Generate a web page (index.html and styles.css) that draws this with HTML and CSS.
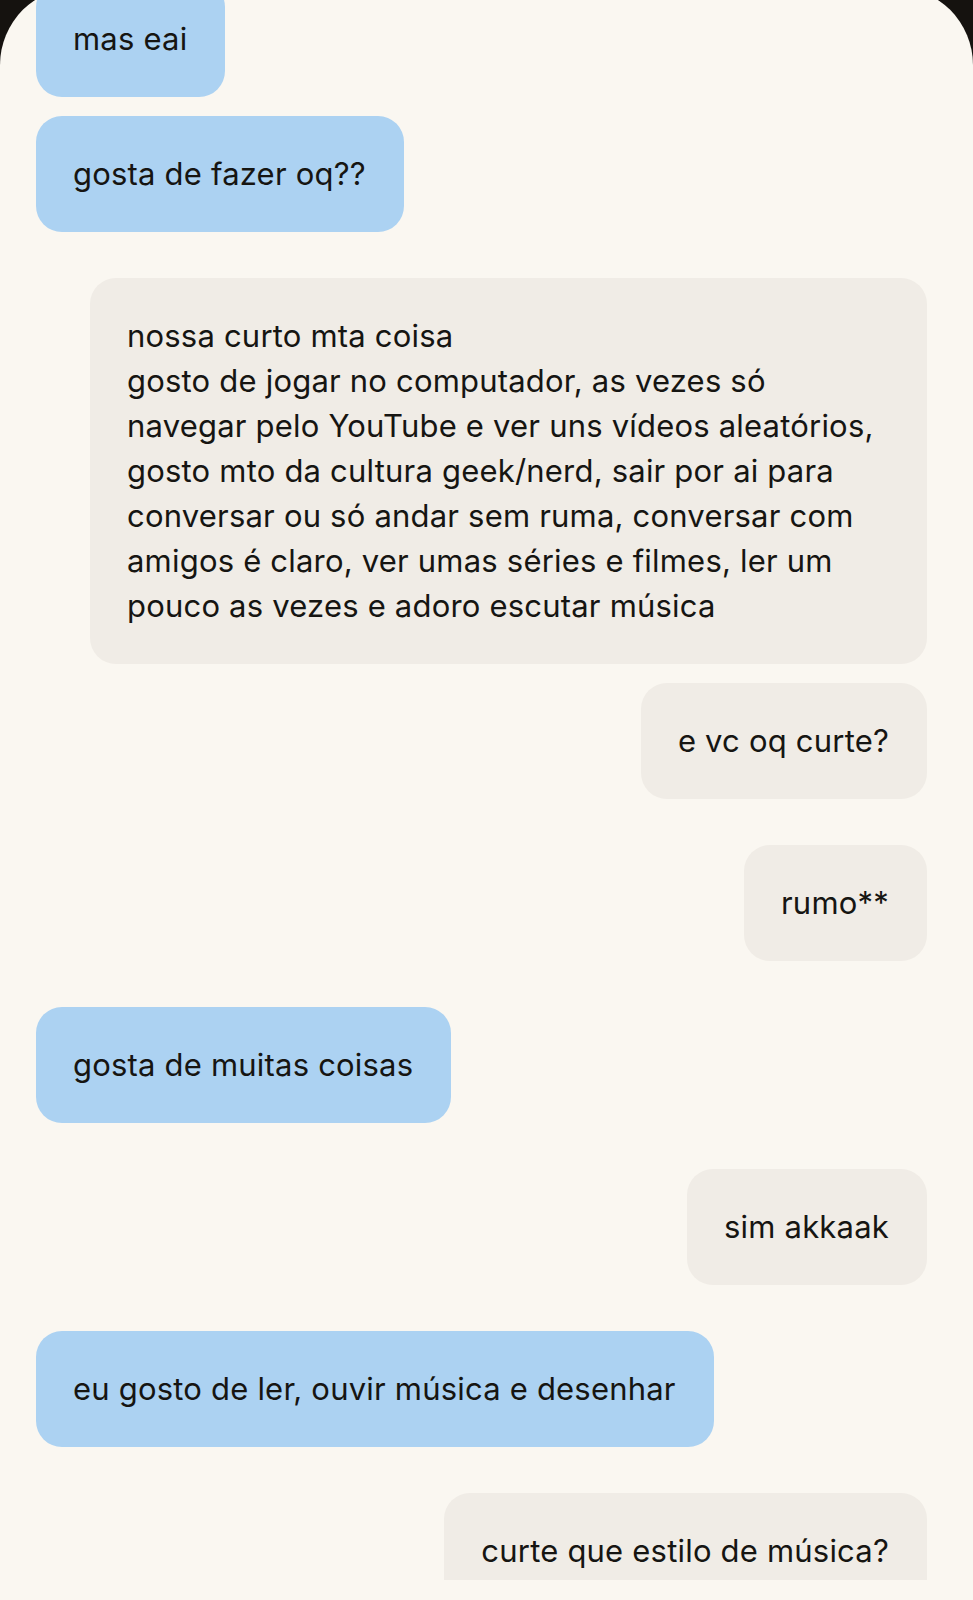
FILE: index.html
```html
<!DOCTYPE html>
<html lang="pt">
<head>
<meta charset="utf-8">
<title>Chat</title>
<link rel="stylesheet" href="styles.css">
</head>
<body>
<div class="panel">
  <div class="messages">
    <div class="msg them first"><div class="bubble">mas eai</div></div>
    <div class="msg them tight"><div class="bubble">gosta de fazer oq??</div></div>
    <div class="msg me"><div class="bubble long">nossa curto mta coisa<br>gosto de jogar no computador, as vezes só<br>navegar pelo YouTube e ver uns vídeos aleatórios,<br>gosto mto da cultura geek/nerd, sair por ai para<br>conversar ou só andar sem ruma, conversar com<br>amigos é claro, ver umas séries e filmes, ler um<br>pouco as vezes e adoro escutar música</div></div>
    <div class="msg me tight"><div class="bubble">e vc oq curte?</div></div>
    <div class="msg me"><div class="bubble">rumo**</div></div>
    <div class="msg them"><div class="bubble">gosta de muitas coisas</div></div>
    <div class="msg me"><div class="bubble">sim akkaak</div></div>
    <div class="msg them"><div class="bubble">eu gosto de ler, ouvir música e desenhar</div></div>
    <div class="msg me"><div class="bubble">curte que estilo de música?</div></div>
  </div>
  <div class="footer"></div>
</div>
</body>
</html>
```

FILE: styles.css
```css
html, body {
  margin: 0;
  padding: 0;
  background: #15120f;
}
body {
  width: 973px;
  height: 1600px;
  overflow: hidden;
  font-family: "Inter", "Liberation Sans", sans-serif;
  color: #161512;
}
.panel {
  margin-top: -13px;
  height: 1613px;
  background: #faf7f1;
  border-radius: 78px 78px 0 0;
  display: flex;
  flex-direction: column;
}
.messages {
  height: 1593px;
  overflow: hidden;
  display: flex;
  flex-direction: column;
  padding: 0 46px 0 36px;
}
.footer {
  height: 20px;
  flex: none;
}
.msg {
  display: flex;
  margin-top: 46px;
  flex: none;
}
.msg.tight {
  margin-top: 19px;
}
.msg.first {
  margin-top: -6px;
}
.msg.them {
  justify-content: flex-start;
}
.msg.me {
  justify-content: flex-end;
}
.bubble {
  font-size: 31px;
  letter-spacing: 0.2px;
  line-height: 45px;
  padding: 35px 38px 36px 37px;
  border-radius: 26px;
  white-space: nowrap;
}
.them .bubble {
  background: #acd2f2;
}
.me .bubble {
  background: #f0ece6;
}
.bubble.long {
  width: 837px;
  box-sizing: border-box;
}
```
